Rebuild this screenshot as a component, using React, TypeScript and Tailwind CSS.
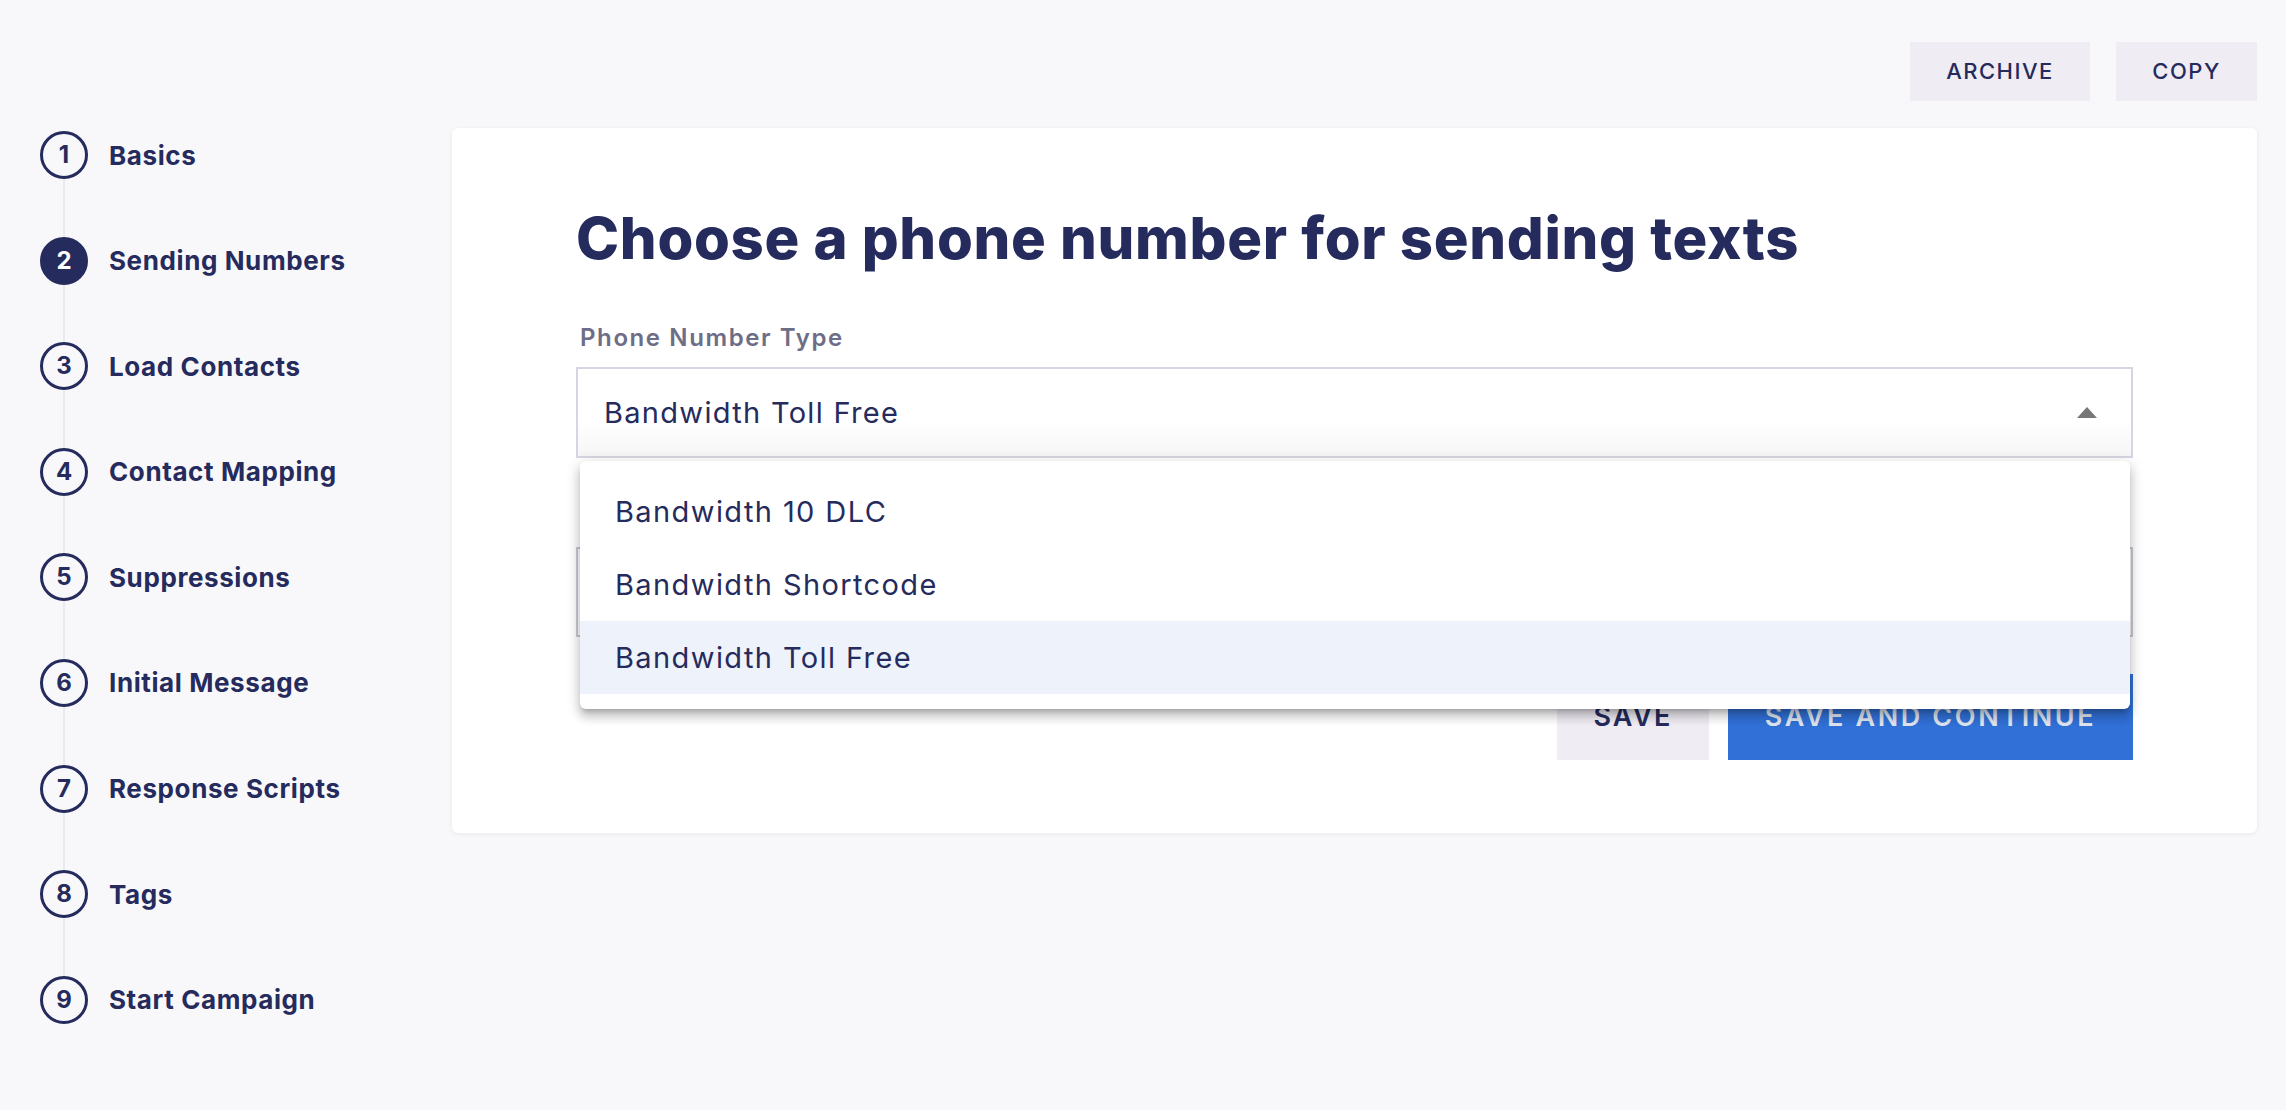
import React from 'react';

const steps = [
  'Basics',
  'Sending Numbers',
  'Load Contacts',
  'Contact Mapping',
  'Suppressions',
  'Initial Message',
  'Response Scripts',
  'Tags',
  'Start Campaign',
];

const options = ['Bandwidth 10 DLC', 'Bandwidth Shortcode', 'Bandwidth Toll Free'];

const Sidebar: React.FC = () => {
  const active = 1;
  return (
    <aside className="w-[452px] shrink-0 pl-[40px] pt-[131px]">
      {steps.map((label, i) => (
        <div key={label}>
          <div className="flex items-center">
            <div
              className={
                i === active
                  ? 'flex h-[48px] w-[48px] items-center justify-center rounded-full border-[3.5px] border-[#252b5c] bg-[#252b5c] text-[24px] font-bold text-white'
                  : 'flex h-[48px] w-[48px] items-center justify-center rounded-full border-[3.5px] border-[#252b5c] text-[24px] font-bold text-[#252b5c]'
              }
            >
              {i + 1}
            </div>
            <span className="ml-[21px] text-[26px] font-bold tracking-[0.6px] text-[#252b5c]">{label}</span>
          </div>
          {i < steps.length - 1 && <div className="ml-[23px] h-[57.6px] w-[2px] bg-[#ebeaf2]" />}
        </div>
      ))}
    </aside>
  );
};

const App: React.FC = () => {
  return (
    <div className="flex min-h-screen bg-[#f8f8fb] font-['Inter',sans-serif] text-[#252b5c]">
      <Sidebar />
      <main className="flex-1 pr-[29px] pt-[42px]">
        {/* Top actions */}
        <div className="flex justify-end gap-[26px]">
          <button className="h-[59px] w-[180px] bg-[#efecf3] text-[22px] font-medium tracking-[1.5px] text-[#252b5c]">
            ARCHIVE
          </button>
          <button className="h-[59px] w-[141px] bg-[#efecf3] text-[22px] font-medium tracking-[1.5px] text-[#252b5c]">
            COPY
          </button>
        </div>

        {/* Card */}
        <div className="mt-[27px] rounded-md bg-white px-[124px] pb-[73px] pt-[70px] shadow-[0_1px_4px_rgba(30,30,80,0.08)]">
          <h1 className="text-[58px] font-extrabold leading-[80px] tracking-[0.7px]">
            Choose a phone number for sending texts
          </h1>
          <label className="mt-[44px] block pl-[4px] text-[24px] font-semibold leading-[32px] tracking-[1.6px] text-[#6e6d87]">
            Phone Number Type
          </label>
          <div className="relative mt-[13px]">
            <div className="flex h-[91px] items-center justify-between border-2 border-[#d6d5e1] bg-gradient-to-b from-white from-60% to-[#f6f6f6] pl-[26px] pr-[34px]">
              <span className="text-[29px] tracking-[1.3px] text-[#252b5c]">Bandwidth Toll Free</span>
              <svg width="20" height="11" viewBox="0 0 20 11">
                <path d="M0 11 L10 0 L20 11 Z" fill="#777777" />
              </svg>
            </div>

            {/* Open dropdown menu */}
            <div className="absolute left-[4px] right-[3px] top-[94px] z-10 rounded-[6px] bg-white pb-[15px] pt-[14px] shadow-[0_5px_5px_-3px_rgba(0,0,0,0.2),0_8px_10px_1px_rgba(0,0,0,0.14),0_3px_14px_2px_rgba(0,0,0,0.12)]">
              {options.map((opt) => (
                <div
                  key={opt}
                  className={
                    opt === 'Bandwidth Toll Free'
                      ? 'flex h-[73px] items-center bg-[#eef2fa] pl-[35px] text-[29px] tracking-[1.4px] text-[#252b5c]'
                      : 'flex h-[73px] items-center pl-[35px] text-[29px] tracking-[1.4px] text-[#252b5c]'
                  }
                >
                  {opt}
                </div>
              ))}
            </div>
          </div>

          {/* Field hidden behind menu */}
          <div className="mt-[89px] h-[90px] border-2 border-[#c9c8d4] bg-white" />

          <div className="mt-[37px] flex justify-end gap-[19px]">
            <button className="h-[86px] w-[152px] bg-[#efecf3] text-[27px] font-semibold tracking-[2px] text-[#252b5c]">
              SAVE
            </button>
            <button className="h-[86px] w-[405px] bg-[#3170d6] text-[27px] font-semibold tracking-[2.6px] text-[#dfe4ee]">
              SAVE AND CONTINUE
            </button>
          </div>
        </div>
      </main>
    </div>
  );
};

export default App;
